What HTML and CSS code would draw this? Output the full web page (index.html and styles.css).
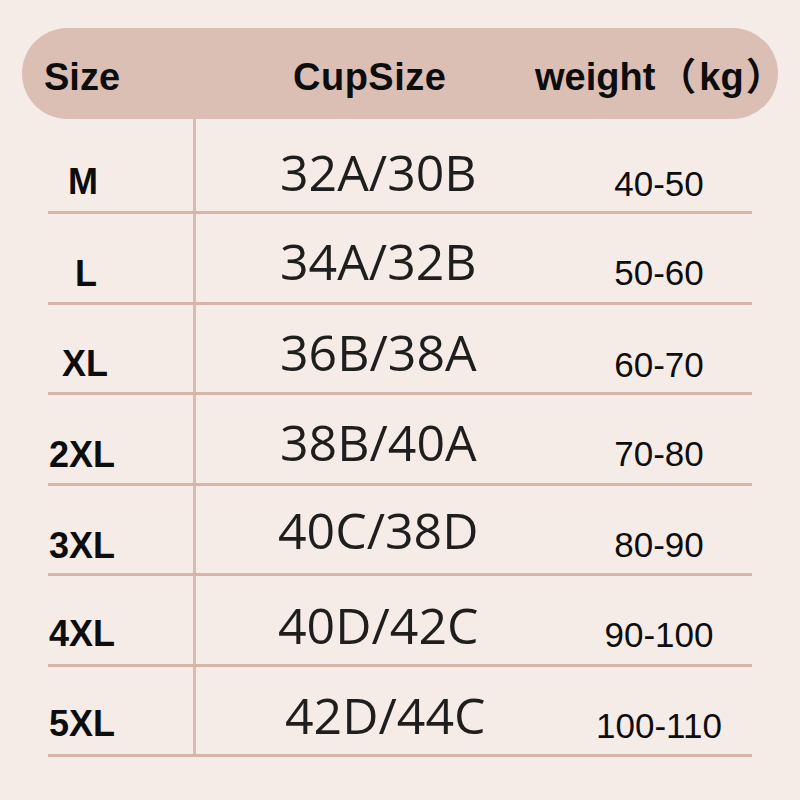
FILE: index.html
```html
<!DOCTYPE html>
<html lang="en">
<head>
<meta charset="utf-8">
<title>Size chart</title>
<link rel="stylesheet" href="styles.css">
</head>
<body>
<div class="page">
  <div class="head">
    <span class="h-size">Size</span>
    <span class="h-cup">CupSize</span>
    <span class="h-weight">weight<span class="paren paren-l">（</span>kg<span class="paren paren-r">）</span></span>
  </div>
  <div class="table">
    <div class="row">
      <div class="c-size"><span class="lbl">M</span></div>
      <div class="c-cup"><span class="cup">32A/30B</span></div>
      <div class="c-weight"><span class="wt">40-50</span></div>
    </div>
    <div class="row">
      <div class="c-size"><span class="lbl">L</span></div>
      <div class="c-cup"><span class="cup">34A/32B</span></div>
      <div class="c-weight"><span class="wt">50-60</span></div>
    </div>
    <div class="row">
      <div class="c-size"><span class="lbl">XL</span></div>
      <div class="c-cup"><span class="cup">36B/38A</span></div>
      <div class="c-weight"><span class="wt">60-70</span></div>
    </div>
    <div class="row">
      <div class="c-size"><span class="lbl">2XL</span></div>
      <div class="c-cup"><span class="cup">38B/40A</span></div>
      <div class="c-weight"><span class="wt">70-80</span></div>
    </div>
    <div class="row">
      <div class="c-size"><span class="lbl">3XL</span></div>
      <div class="c-cup"><span class="cup">40C/38D</span></div>
      <div class="c-weight"><span class="wt">80-90</span></div>
    </div>
    <div class="row">
      <div class="c-size"><span class="lbl">4XL</span></div>
      <div class="c-cup"><span class="cup">40D/42C</span></div>
      <div class="c-weight"><span class="wt">90-100</span></div>
    </div>
    <div class="row">
      <div class="c-size"><span class="lbl">5XL</span></div>
      <div class="c-cup"><span class="cup">42D/44C</span></div>
      <div class="c-weight"><span class="wt">100-110</span></div>
    </div>
  </div>
</div>
</body>
</html>
```

FILE: styles.css
```css
html, body {
  margin: 0;
  padding: 0;
}

body {
  background: #f5ece8;
  width: 800px;
  height: 800px;
  overflow: hidden;
}

.page {
  padding-top: 28px;
}

.head {
  margin-left: 22px;
  width: 756px;
  height: 91px;
  box-sizing: border-box;
  background: #dbbfb4;
  border-radius: 46px;
  display: flex;
  align-items: flex-end;
  padding: 0 0 23px 22px;
  font-family: "Liberation Sans", Arial, "Noto Sans CJK SC", sans-serif;
  font-weight: bold;
  font-size: 38px;
  line-height: 1;
  color: #0d0d0d;
}

.h-size {
  width: 249px;
  flex: none;
}

.h-cup {
  width: 242px;
  flex: none;
  letter-spacing: 0.5px;
}

.h-weight {
  white-space: nowrap;
}

.paren {
  font-family: "Noto Sans CJK SC", sans-serif;
  font-weight: bold;
  font-size: 38px;
}

.paren-l {
  margin: 0 3px 0 3px;
}

.paren-r {
  margin-left: 2px;
}

.table {
  margin-left: 48px;
  width: 704px;
}

.row {
  display: flex;
  height: 90.5px;
  box-sizing: border-box;
  border-bottom: 3px solid #d6b5a8;
}

.row:first-child {
  height: 95px;
}

.row > div {
  display: flex;
  align-items: flex-end;
  box-sizing: border-box;
}

.c-size {
  width: 148px;
  border-right: 3px solid #dabbb0;
  padding-left: 1px;
  padding-bottom: 10px;
}

.c-cup {
  width: 370px;
  padding-left: 84px;
  padding-bottom: 15px;
}

.c-weight {
  flex: 1;
  justify-content: center;
  padding-bottom: 11.5px;
}

.lbl {
  font-family: "Liberation Sans", Arial, sans-serif;
  font-weight: bold;
  font-size: 36px;
  line-height: 1;
  color: #0d0d0d;
}

.cup {
  font-family: "Open Sans", "Noto Sans", sans-serif;
  font-size: 50px;
  line-height: 1;
  color: #1e1e1e;
}

.wt {
  font-family: "Liberation Sans", Arial, sans-serif;
  font-size: 35px;
  line-height: 1;
  color: #0d0d0d;
}

/* per-row fine placement, as in the original chart */
.row:nth-child(1) .c-size { padding-left: 20px; padding-bottom: 11px; }
.row:nth-child(1) .c-cup { padding-bottom: 14px; }
.row:nth-child(1) .c-weight { padding-bottom: 10.5px; }
.row:nth-child(2) .c-size { padding-left: 27px; }
.row:nth-child(2) .c-cup { padding-bottom: 16px; }
.row:nth-child(3) .c-size { padding-left: 14px; }
.row:nth-child(3) .c-weight { padding-bottom: 10.5px; }
.row:nth-child(4) .c-cup { padding-bottom: 16px; }
.row:nth-child(5) .c-size { padding-bottom: 9px; }
.row:nth-child(5) .c-cup { padding-left: 82px; padding-bottom: 18px; }
.row:nth-child(6) .c-size { padding-bottom: 12px; }
.row:nth-child(6) .c-cup { padding-left: 82px; padding-bottom: 14px; }
.row:nth-child(7) .c-size { padding-bottom: 12px; }
.row:nth-child(7) .c-cup { padding-left: 89px; padding-bottom: 14px; }
```
